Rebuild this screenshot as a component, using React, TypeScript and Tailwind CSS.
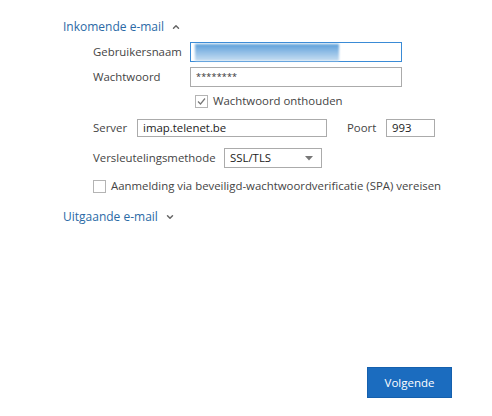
import { ChevronDown, ChevronUp } from "lucide-react"

function Checkbox({ checked }: { checked?: boolean }) {
  return (
    <span className="flex h-[13px] w-[13px] shrink-0 items-center justify-center border border-[#b4b4b4] bg-white">
      {checked && (
        <svg width="11" height="11" viewBox="0 0 11 11">
          <path d="M2 5.5 L4.5 8 L9 2.5" fill="none" stroke="#777" strokeWidth="1.2" />
        </svg>
      )}
    </span>
  )
}

export default function App() {
  return (
    <div
      className="flex h-[416px] w-[492px] flex-col whitespace-nowrap bg-white pl-[63px] pr-[40px] pt-[19px] pb-[18px] text-[11.4px] text-[#444]"
      style={{ fontFamily: '"Open Sans", "Noto Sans", sans-serif' }}
    >
      {/* Inkomende e-mail */}
      <div className="flex h-[16px] items-center gap-[7px] text-[#2b6aa6]">
        <span className="text-[12px]">Inkomende e-mail</span>
        <ChevronUp size={10} strokeWidth={3.5} className="text-[#666]" />
      </div>

      <div className="mt-[7px] flex flex-col pl-[30px]">
        <div className="flex h-[20px] items-center">
          <span className="w-[97px]">Gebruikersnaam</span>
          <div className="flex h-[20px] w-[212px] items-center border border-[#3a8bd6] bg-white px-[4px]">
            <div className="h-[17px] w-[144px] bg-gradient-to-b from-[#5c9fd9] to-[#c8dff2] blur-[1px]" />
          </div>
        </div>

        <div className="mt-[5px] flex h-[20px] items-center">
          <span className="w-[97px]">Wachtwoord</span>
          <div className="flex h-[20px] w-[212px] items-center border border-[#ababab] bg-white px-[5px] text-[9px] tracking-[0.2px] text-[#333]">
            ********
          </div>
        </div>

        <label className="mt-[7px] flex h-[14px] items-center gap-[5px] pl-[102px]">
          <Checkbox checked />
          <span>Wachtwoord onthouden</span>
        </label>

        <div className="mt-[11px] flex h-[18px] items-center">
          <span className="w-[44px]">Server</span>
          <div className="flex h-[18px] w-[190px] items-center border border-[#ababab] bg-white px-[5px] text-[#222]">
            imap.telenet.be
          </div>
          <span className="ml-[20px] w-[39px]">Poort</span>
          <div className="flex h-[18px] w-[49px] items-center border border-[#ababab] bg-white px-[5px] text-[#222]">
            993
          </div>
        </div>

        <div className="mt-[11px] flex h-[20px] items-center">
          <span className="w-[131px]">Versleutelingsmethode</span>
          <div className="flex h-[20px] w-[98px] items-center justify-between border border-[#ababab] bg-white pl-[5px] pr-[8px] text-[#222]">
            <span>SSL/TLS</span>
            <svg width="8" height="5" viewBox="0 0 8 5">
              <path d="M0 0 H8 L4 4.5 Z" fill="#777" />
            </svg>
          </div>
        </div>

        <label className="mt-[11px] flex h-[14px] items-center gap-[5px]">
          <Checkbox />
          <span>Aanmelding via beveiligd-wachtwoordverificatie (SPA) vereisen</span>
        </label>
      </div>

      {/* Uitgaande e-mail */}
      <div className="mt-[16px] flex h-[16px] items-center gap-[7px] text-[#2b6aa6]">
        <span className="text-[12px]">Uitgaande e-mail</span>
        <ChevronDown size={10} strokeWidth={3.5} className="text-[#666]" />
      </div>

      <div className="mt-auto flex justify-end">
        <button className="h-[31px] w-[85px] border border-[#1560ad] bg-[#1b6cbf] text-[11.5px] text-white">
          Volgende
        </button>
      </div>
    </div>
  )
}
